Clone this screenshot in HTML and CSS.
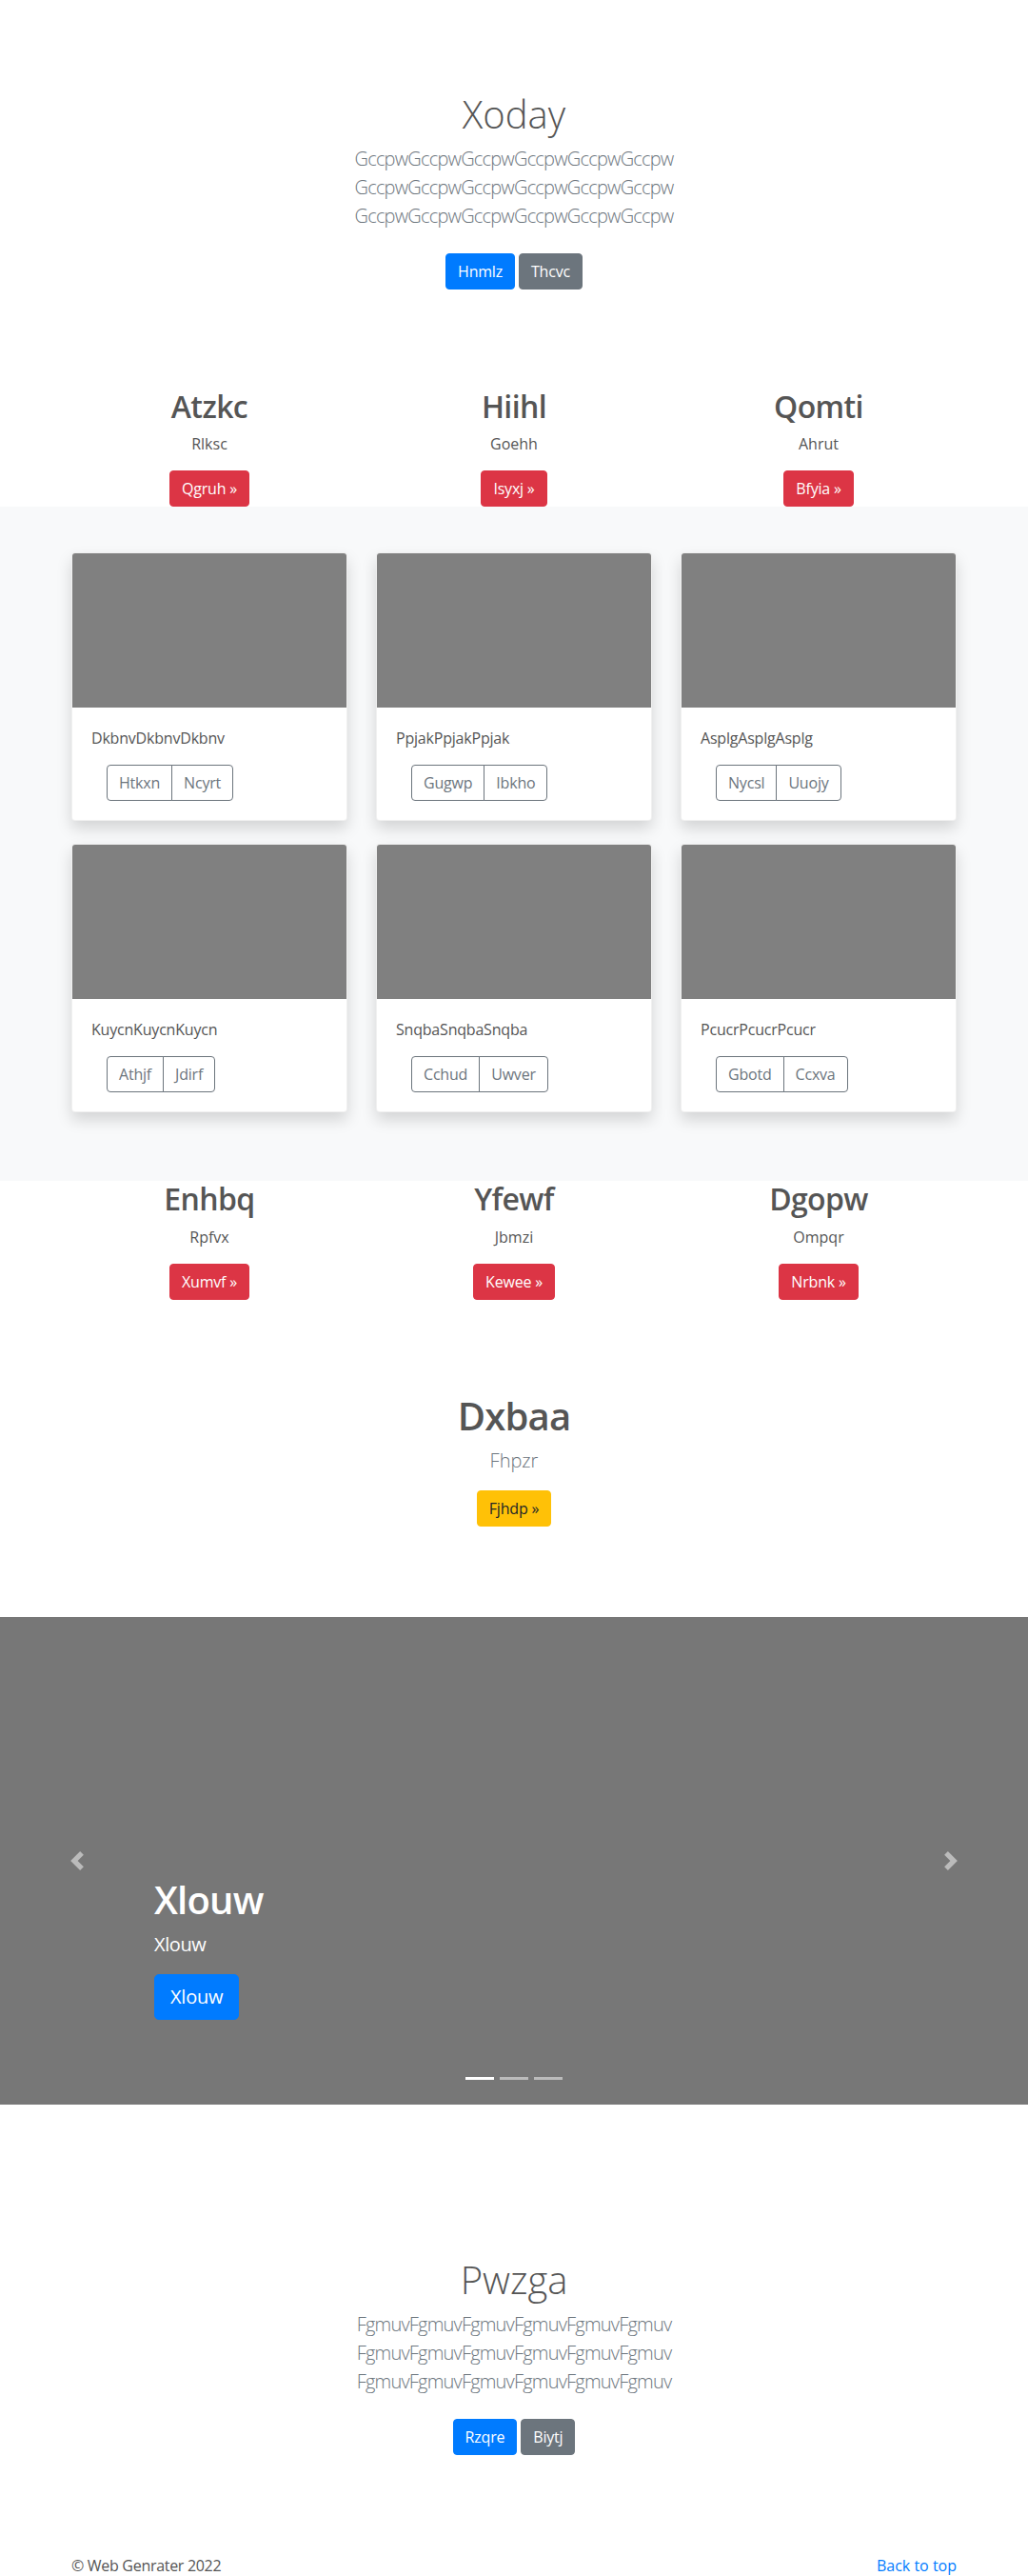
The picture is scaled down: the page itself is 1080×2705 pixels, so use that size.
FILE: index.html
```html
<!DOCTYPE html>
<html lang="en">
<head>
<meta charset="utf-8">
<title>Xoday</title>
<link rel="stylesheet" href="styles.css">
</head>
<body>
<section class="hero">
  <h1 class="hero-title">Xoday</h1>
  <p class="lead">GccpwGccpwGccpwGccpwGccpwGccpw<br>GccpwGccpwGccpwGccpwGccpwGccpw<br>GccpwGccpwGccpwGccpwGccpwGccpw</p>
  <div class="btn-row">
    <a class="btn btn-primary" href="#">Hnmlz</a>
    <a class="btn btn-secondary" href="#">Thcvc</a>
  </div>
</section>

<section class="features features-top">
  <div class="container grid3">
    <div class="feature">
      <h2 class="feature-title">Atzkc</h2>
      <p class="feature-text">Rlksc</p>
      <p class="feature-action"><a class="btn btn-danger" href="#">Qgruh »</a></p>
    </div>
    <div class="feature">
      <h2 class="feature-title">Hiihl</h2>
      <p class="feature-text">Goehh</p>
      <p class="feature-action"><a class="btn btn-danger" href="#">Isyxj »</a></p>
    </div>
    <div class="feature">
      <h2 class="feature-title">Qomti</h2>
      <p class="feature-text">Ahrut</p>
      <p class="feature-action"><a class="btn btn-danger" href="#">Bfyia »</a></p>
    </div>
  </div>
</section>

<section class="album">
  <div class="container grid3 cards">
    <div class="card">
      <div class="thumb"></div>
      <div class="card-body">
        <p class="card-text">DkbnvDkbnvDkbnv</p>
        <div class="btn-group"><a class="btn btn-outline" href="#">Htkxn</a><a class="btn btn-outline" href="#">Ncyrt</a></div>
      </div>
    </div>
    <div class="card">
      <div class="thumb"></div>
      <div class="card-body">
        <p class="card-text">PpjakPpjakPpjak</p>
        <div class="btn-group"><a class="btn btn-outline" href="#">Gugwp</a><a class="btn btn-outline" href="#">Ibkho</a></div>
      </div>
    </div>
    <div class="card">
      <div class="thumb"></div>
      <div class="card-body">
        <p class="card-text">AsplgAsplgAsplg</p>
        <div class="btn-group"><a class="btn btn-outline" href="#">Nycsl</a><a class="btn btn-outline" href="#">Uuojy</a></div>
      </div>
    </div>
    <div class="card">
      <div class="thumb"></div>
      <div class="card-body">
        <p class="card-text">KuycnKuycnKuycn</p>
        <div class="btn-group"><a class="btn btn-outline" href="#">Athjf</a><a class="btn btn-outline" href="#">Jdirf</a></div>
      </div>
    </div>
    <div class="card">
      <div class="thumb"></div>
      <div class="card-body">
        <p class="card-text">SnqbaSnqbaSnqba</p>
        <div class="btn-group"><a class="btn btn-outline" href="#">Cchud</a><a class="btn btn-outline" href="#">Uwver</a></div>
      </div>
    </div>
    <div class="card">
      <div class="thumb"></div>
      <div class="card-body">
        <p class="card-text">PcucrPcucrPcucr</p>
        <div class="btn-group"><a class="btn btn-outline" href="#">Gbotd</a><a class="btn btn-outline" href="#">Ccxva</a></div>
      </div>
    </div>
  </div>
</section>

<section class="features">
  <div class="container grid3">
    <div class="feature">
      <h2 class="feature-title">Enhbq</h2>
      <p class="feature-text">Rpfvx</p>
      <p class="feature-action"><a class="btn btn-danger" href="#">Xumvf »</a></p>
    </div>
    <div class="feature">
      <h2 class="feature-title">Yfewf</h2>
      <p class="feature-text">Jbmzi</p>
      <p class="feature-action"><a class="btn btn-danger" href="#">Kewee »</a></p>
    </div>
    <div class="feature">
      <h2 class="feature-title">Dgopw</h2>
      <p class="feature-text">Ompqr</p>
      <p class="feature-action"><a class="btn btn-danger" href="#">Nrbnk »</a></p>
    </div>
  </div>
</section>

<section class="cta">
  <h1 class="cta-title">Dxbaa</h1>
  <p class="cta-lead">Fhpzr</p>
  <a class="btn btn-warning" href="#">Fjhdp »</a>
</section>

<section class="carousel">
  <div class="carousel-caption">
    <h1 class="caption-title">Xlouw</h1>
    <p class="caption-text">Xlouw</p>
    <p class="caption-action"><a class="btn btn-lg btn-primary" href="#">Xlouw</a></p>
  </div>
  <a class="carousel-control control-prev" href="#">
    <svg class="control-icon" viewBox="0 0 8 8" width="20" height="20"><path fill="#fff" d="M5.25 0l-4 4 4 4 1.5-1.5L4.25 4l2.5-2.5L5.25 0z"/></svg>
  </a>
  <a class="carousel-control control-next" href="#">
    <svg class="control-icon" viewBox="0 0 8 8" width="20" height="20"><path fill="#fff" d="M2.75 0l-1.5 1.5L3.75 4l-2.5 2.5L2.75 8l4-4-4-4z"/></svg>
  </a>
  <ol class="carousel-indicators">
    <li class="active"></li>
    <li></li>
    <li></li>
  </ol>
</section>

<section class="hero hero-bottom">
  <h1 class="hero-title">Pwzga</h1>
  <p class="lead">FgmuvFgmuvFgmuvFgmuvFgmuvFgmuv<br>FgmuvFgmuvFgmuvFgmuvFgmuvFgmuv<br>FgmuvFgmuvFgmuvFgmuvFgmuvFgmuv</p>
  <div class="btn-row">
    <a class="btn btn-primary" href="#">Rzqre</a>
    <a class="btn btn-secondary" href="#">Biytj</a>
  </div>
</section>

<footer class="footer">
  <div class="container footer-row">
    <p class="footer-text">© Web Genrater 2022</p>
    <a class="footer-link" href="#">Back to top</a>
  </div>
</footer>
</body>
</html>
```

FILE: styles.css
```css
* { box-sizing: border-box; }

body {
  margin: 0;
  font-family: "Open Sans", "Noto Sans", sans-serif;
  font-size: 16px;
  line-height: 1.5;
  color: #555;
  background: #fff;
}

.container {
  width: 960px;
  margin: 0 auto;
  padding: 0 15px;
}

.grid3 {
  display: grid;
  grid-template-columns: repeat(3, 1fr);
  column-gap: 30px;
}

/* buttons */
.btn {
  display: inline-block;
  padding: 6px 12px;
  font-size: 16px;
  line-height: 24px;
  font-weight: 400;
  border: 1px solid transparent;
  border-radius: 4px;
  text-decoration: none;
  text-align: center;
  white-space: nowrap;
  letter-spacing: -0.2px;
}
.btn-primary { background: #007bff; border-color: #007bff; color: #fff; }
.btn-secondary { background: #6c757d; border-color: #6c757d; color: #fff; }
.btn-danger { background: #dc3545; border-color: #dc3545; color: #fff; }
.btn-warning { background: #ffc107; border-color: #ffc107; color: #212529; }
.btn-lg {
  padding: 8px 16px;
  font-size: 20px;
  line-height: 30px;
  border-radius: 5px;
}

/* hero */
.hero {
  padding-top: 96px;
  text-align: center;
}
.hero-bottom { padding-top: 160px; }
.hero-title {
  margin: 0 0 8px;
  font-size: 40px;
  font-weight: 300;
  line-height: 1.2;
}
.lead {
  margin: 0 0 24px;
  font-size: 20px;
  font-weight: 300;
  line-height: 30px;
  color: #6c757d;
  letter-spacing: -0.8px;
}
.btn-row {
  display: flex;
  justify-content: center;
  gap: 4px;
}

/* features */
.features-top { margin-top: 104px; }
.feature { text-align: center; }
.feature-title {
  margin: 0 0 8px;
  font-size: 32px;
  font-weight: 600;
  line-height: 1.2;
  letter-spacing: -0.6px;
}
.feature-text { margin: 0 0 16px; }
.feature-action { margin: 0; }

/* album */
.album {
  background: #f8f9fa;
  padding: 48px 0 72px;
}
.cards { row-gap: 24px; }
.card {
  background: #fff;
  border: 1px solid rgba(0, 0, 0, 0.06);
  border-radius: 4px;
  overflow: hidden;
  box-shadow: 0 8px 16px rgba(0, 0, 0, 0.15);
}
.thumb {
  height: 162px;
  background: #808080;
}
.card-body { padding: 20px; }
.card-text { margin: 0 0 16px; letter-spacing: -0.2px; }
.btn-group {
  display: inline-flex;
  margin-left: 16px;
}
.btn-outline {
  color: #6c757d;
  border-color: #6c757d;
  background: transparent;
}
.btn-group .btn-outline:first-child {
  border-top-right-radius: 0;
  border-bottom-right-radius: 0;
}
.btn-group .btn-outline + .btn-outline {
  margin-left: -1px;
  border-top-left-radius: 0;
  border-bottom-left-radius: 0;
}

/* cta */
.cta {
  margin-top: 98px;
  text-align: center;
}
.cta-title {
  margin: 0 0 8px;
  font-size: 40px;
  font-weight: 600;
  line-height: 1.2;
  letter-spacing: -0.8px;
}
.cta-lead {
  margin: 0 0 16px;
  font-size: 20px;
  font-weight: 300;
  line-height: 30px;
  color: #6c757d;
}

/* carousel */
.carousel {
  position: relative;
  margin-top: 95px;
  height: 512px;
  background: #777;
  overflow: hidden;
}
.carousel-caption {
  position: absolute;
  left: 15%;
  right: 15%;
  bottom: 69px;
  padding: 20px 0;
  color: #fff;
  text-align: left;
}
.caption-title {
  margin: 0 0 8px;
  font-size: 40px;
  font-weight: 600;
  line-height: 1.2;
  letter-spacing: -0.8px;
}
.caption-text {
  margin: 0 0 16px;
  font-size: 20px;
  line-height: 30px;
  letter-spacing: -0.4px;
}
.caption-action { margin: 0; }
.carousel-control {
  position: absolute;
  top: 0;
  bottom: 0;
  width: 15%;
  display: flex;
  align-items: center;
  justify-content: center;
  opacity: 0.5;
}
.control-prev { left: 0; }
.control-next { right: 0; }
.control-icon { display: block; }
.carousel-indicators {
  position: absolute;
  left: 0;
  right: 0;
  bottom: 16px;
  margin: 0;
  padding: 0;
  list-style: none;
  display: flex;
  justify-content: center;
}
.carousel-indicators li {
  width: 30px;
  height: 3px;
  margin: 0 3px;
  box-sizing: content-box;
  border-top: 10px solid transparent;
  border-bottom: 10px solid transparent;
  background-color: #fff;
  background-clip: padding-box;
  opacity: 0.5;
}
.carousel-indicators li.active { opacity: 1; }

/* footer */
.footer { margin-top: 104px; }
.footer-row {
  display: flex;
  justify-content: space-between;
}
.footer-text { margin: 0; letter-spacing: -0.3px; }
.footer-link {
  color: #007bff;
  text-decoration: none;
}
```
